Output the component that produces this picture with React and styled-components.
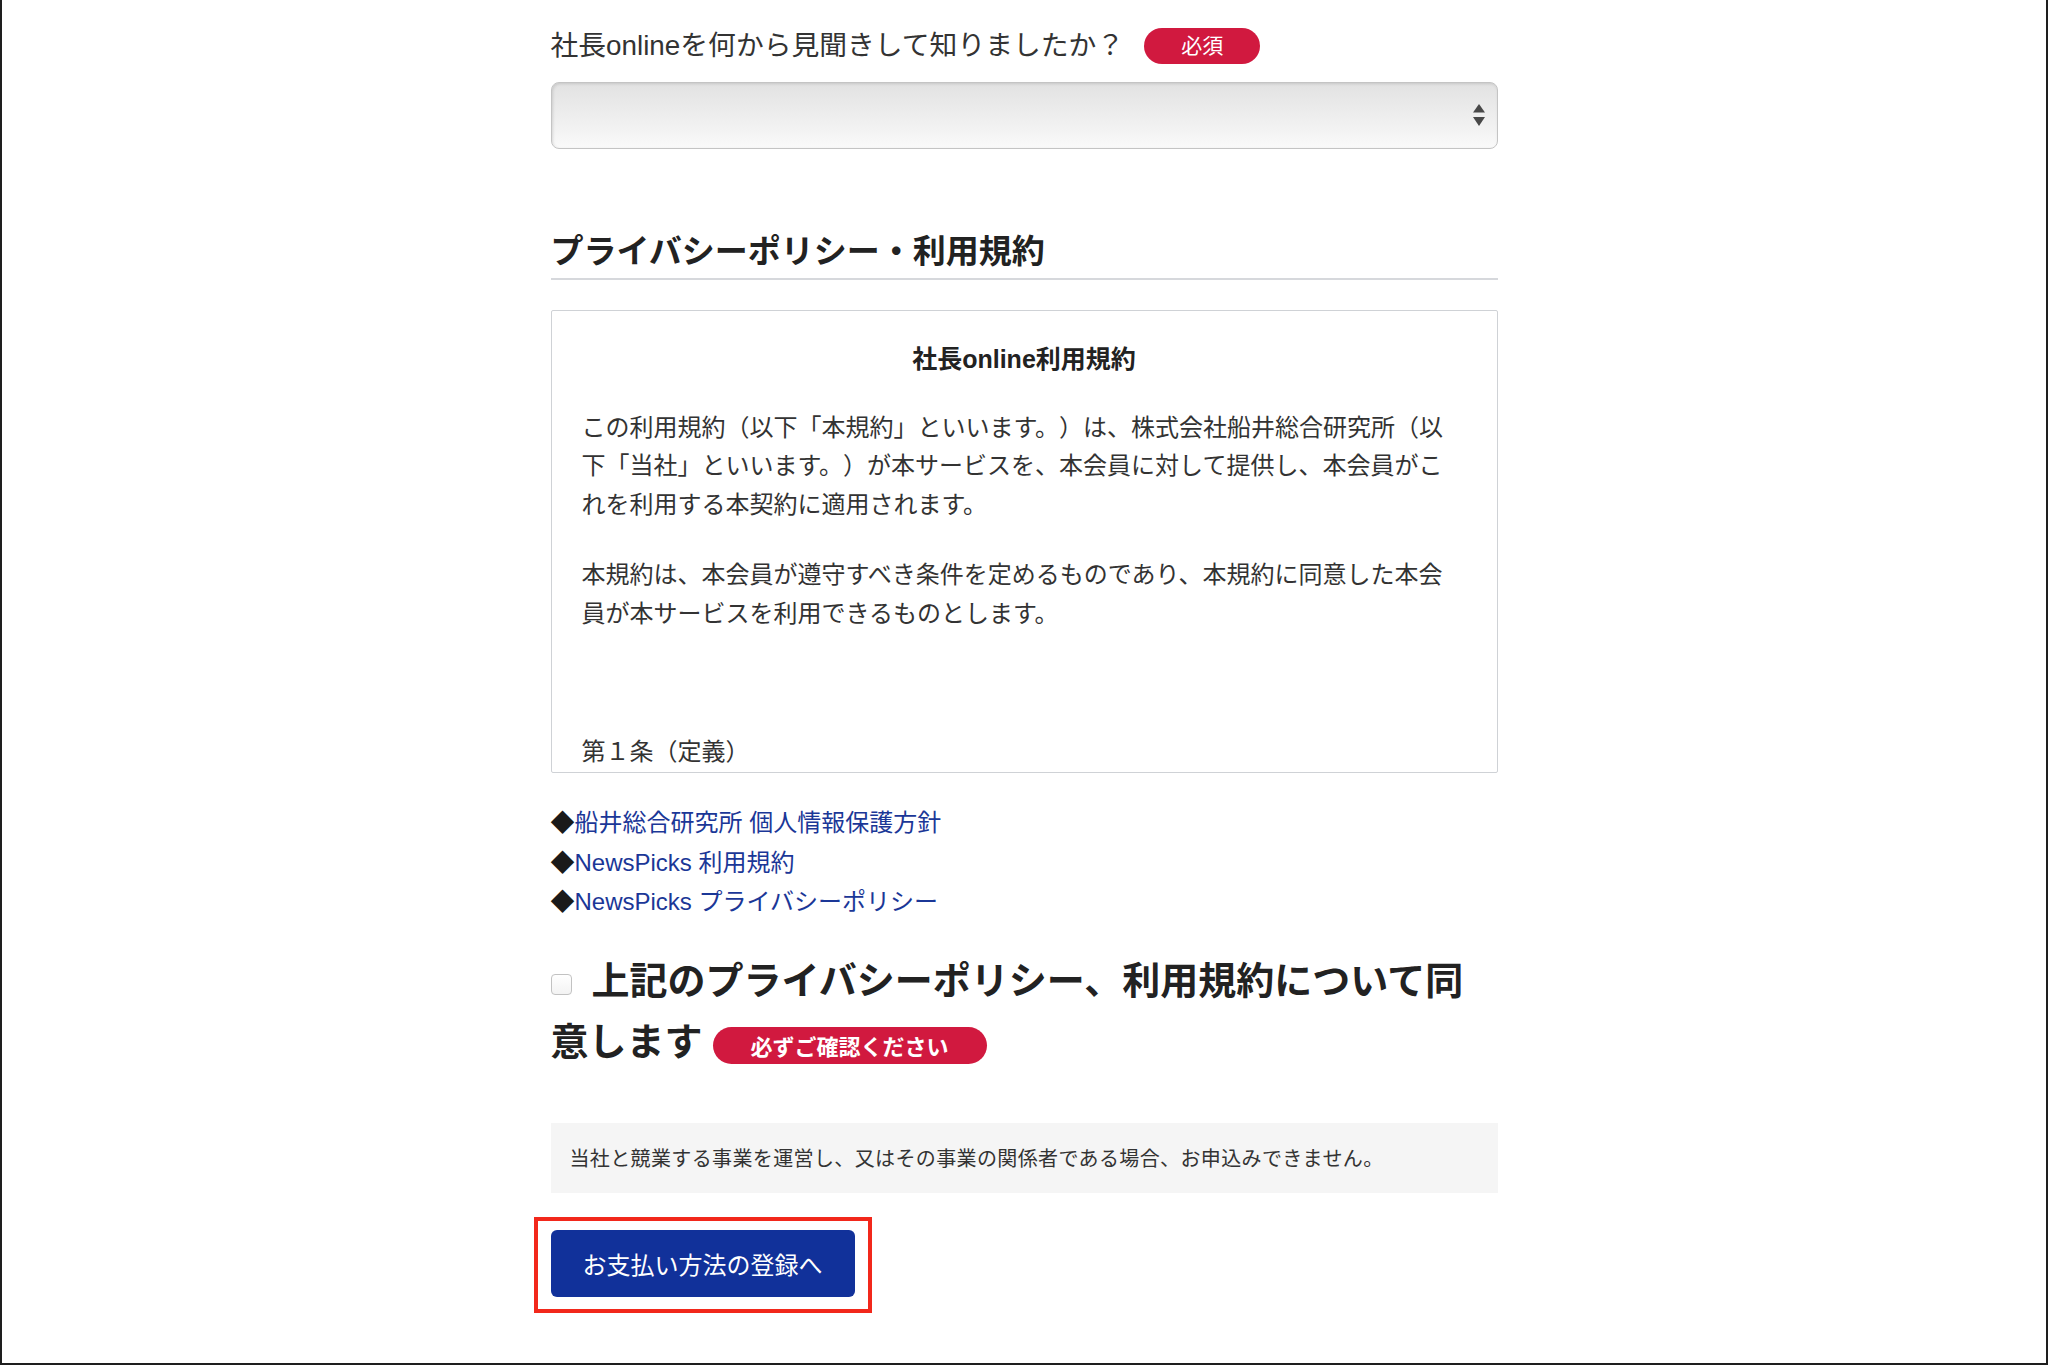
import React from "react";
import styled, { createGlobalStyle } from "styled-components";

const GlobalStyle = createGlobalStyle`
  body {
    margin: 0;
    background: #fff;
    color: #333;
    font-family: "Liberation Sans", "Noto Sans CJK JP", sans-serif;
    text-spacing-trim: space-all;
  }
`;

const Frame = styled.div`
  min-height: 1365px;
  box-sizing: border-box;
  border: 2px solid #1e1e1e;
  border-top: none;
  background: #fff;
`;

const Column = styled.div`
  width: 947px;
  margin: 0 auto;
  padding-top: 24px;
`;

const LabelRow = styled.div`
  display: flex;
  align-items: center;
  gap: 20px;
  height: 43px;
  margin-bottom: 15px;
`;

const Label = styled.span`
  font-size: 27.8px;
  line-height: 43px;
  color: #333;
`;

const Badge = styled.span`
  display: inline-block;
  height: ${(p) => (p.$big ? "37px" : "36px")};
  line-height: ${(p) => (p.$big ? "37px" : "36px")};
  padding: 0 ${(p) => (p.$big ? "38px" : "37px")};
  border-radius: 20px;
  background: #d1193f;
  color: #fff;
  font-size: ${(p) => (p.$big ? "22px" : "21px")};
  font-weight: ${(p) => (p.$big ? 700 : 400)};
  margin-left: ${(p) => (p.$big ? "10px" : "0")};
  vertical-align: baseline;
`;

const SelectWrap = styled.div`
  position: relative;
  height: 67px;
`;

const Select = styled.select`
  appearance: none;
  width: 100%;
  height: 100%;
  box-sizing: border-box;
  border: 1px solid #c4c4c4;
  border-radius: 8px;
  background: linear-gradient(#e2e2e2, #f2f2f2 70%, #fafafa);
  box-shadow: inset 1px 1px 3px rgba(0, 0, 0, 0.12);
  font-size: 24px;
  outline: none;
`;

const Arrows = styled.svg`
  position: absolute;
  right: 12px;
  top: 21px;
  pointer-events: none;
`;

const Heading = styled.h2`
  margin: 80px 0 0;
  padding-bottom: 3px;
  border-bottom: 2px solid #d6d8dc;
  font-size: 33px;
  line-height: 46px;
  font-weight: 700;
  color: #222;
`;

const TermsBox = styled.div`
  margin-top: 30px;
  height: 463px;
  box-sizing: border-box;
  border: 1px solid #cfd2d6;
  border-radius: 2px;
  padding: 32px 45px 0 30px;
  overflow: hidden;
`;

const TermsTitle = styled.h3`
  margin: 0 0 34px;
  padding-left: 15px;
  text-align: center;
  font-size: 25px;
  line-height: 32px;
  font-weight: 700;
  color: #222;
`;

const TermsText = styled.p`
  margin: 0 0 32px;
  font-size: 24px;
  line-height: 38.4px;
  color: #333;
`;

const Article = styled.p`
  margin: 100px 0 0;
  font-size: 24px;
  line-height: 38.4px;
  color: #333;
`;

const LinkList = styled.ul`
  list-style: none;
  margin: 28px 0 0;
  padding: 0;
`;

const LinkItem = styled.li`
  height: 39.5px;
  font-size: 24px;
  line-height: 39.5px;
  white-space: nowrap;
`;

const Diamond = styled.span`
  font-family: "Noto Sans CJK JP", sans-serif;
  color: #1a1a1a;
`;

const Link = styled.a`
  color: #1b3797;
  text-decoration: none;
`;

const Agree = styled.label`
  display: block;
  margin-top: 27px;
  font-family: "Noto Sans CJK JP", sans-serif;
  font-size: 38px;
  line-height: 61px;
  font-weight: 700;
  color: #222;
`;

const Check = styled.input`
  appearance: none;
  width: 21px;
  height: 21px;
  margin: 0 20px 0 0;
  border: 1px solid #c2c2c2;
  border-radius: 4px;
  background: linear-gradient(#fff, #f3f3f3);
  vertical-align: -1px;
`;

const Notice = styled.div`
  margin-top: 54px;
  height: 70px;
  display: flex;
  align-items: center;
  padding: 0 19px;
  background: #f5f5f5;
  font-size: 20px;
  letter-spacing: 0.37px;
  color: #333;
`;

const Highlight = styled.div`
  display: inline-block;
  margin: 24px 0 0 -17px;
  padding: 9px 13px 12px;
  border: 4px solid #f2281b;
`;

const SubmitButton = styled.button`
  display: block;
  width: 304px;
  height: 67px;
  border: none;
  border-radius: 6px;
  background: #11319a;
  color: #fff;
  font-family: "Liberation Sans", "Noto Sans CJK JP", sans-serif;
  font-size: 24px;
  cursor: pointer;
`;

const links = [
  "船井総合研究所 個人情報保護方針",
  "NewsPicks 利用規約",
  "NewsPicks プライバシーポリシー",
];

export default function App() {
  return (
    <>
      <GlobalStyle />
      <Frame>
        <Column>
          <LabelRow>
            <Label>社長onlineを何から見聞きして知りましたか？</Label>
            <Badge>必須</Badge>
          </LabelRow>
          <SelectWrap>
            <Select defaultValue="">
              <option value=""></option>
            </Select>
            <Arrows width="14" height="24" viewBox="0 0 14 24">
              <path d="M7 1 L13 9.5 H1 Z" fill="#484848" />
              <path d="M1 14 H13 L7 23 Z" fill="#484848" />
            </Arrows>
          </SelectWrap>

          <Heading>プライバシーポリシー・利用規約</Heading>

          <TermsBox>
            <TermsTitle>社長online利用規約</TermsTitle>
            <TermsText>
              この利用規約（以下「本規約」といいます。）は、株式会社船井総合研究所（以下「当社」といいます。）が本サービスを、本会員に対して提供し、本会員がこれを利用する本契約に適用されます。
            </TermsText>
            <TermsText>
              本規約は、本会員が遵守すべき条件を定めるものであり、本規約に同意した本会員が本サービスを利用できるものとします。
            </TermsText>
            <Article>第１条（定義）</Article>
          </TermsBox>

          <LinkList>
            {links.map((text) => (
              <LinkItem key={text}>
                <Diamond>◆</Diamond>
                <Link href="#">{text}</Link>
              </LinkItem>
            ))}
          </LinkList>

          <Agree>
            <Check type="checkbox" />
            上記のプライバシーポリシー、利用規約について同意します
            <Badge $big>必ずご確認ください</Badge>
          </Agree>

          <Notice>
            当社と競業する事業を運営し、又はその事業の関係者である場合、お申込みできません。
          </Notice>

          <Highlight>
            <SubmitButton type="button">お支払い方法の登録へ</SubmitButton>
          </Highlight>
        </Column>
      </Frame>
    </>
  );
}
